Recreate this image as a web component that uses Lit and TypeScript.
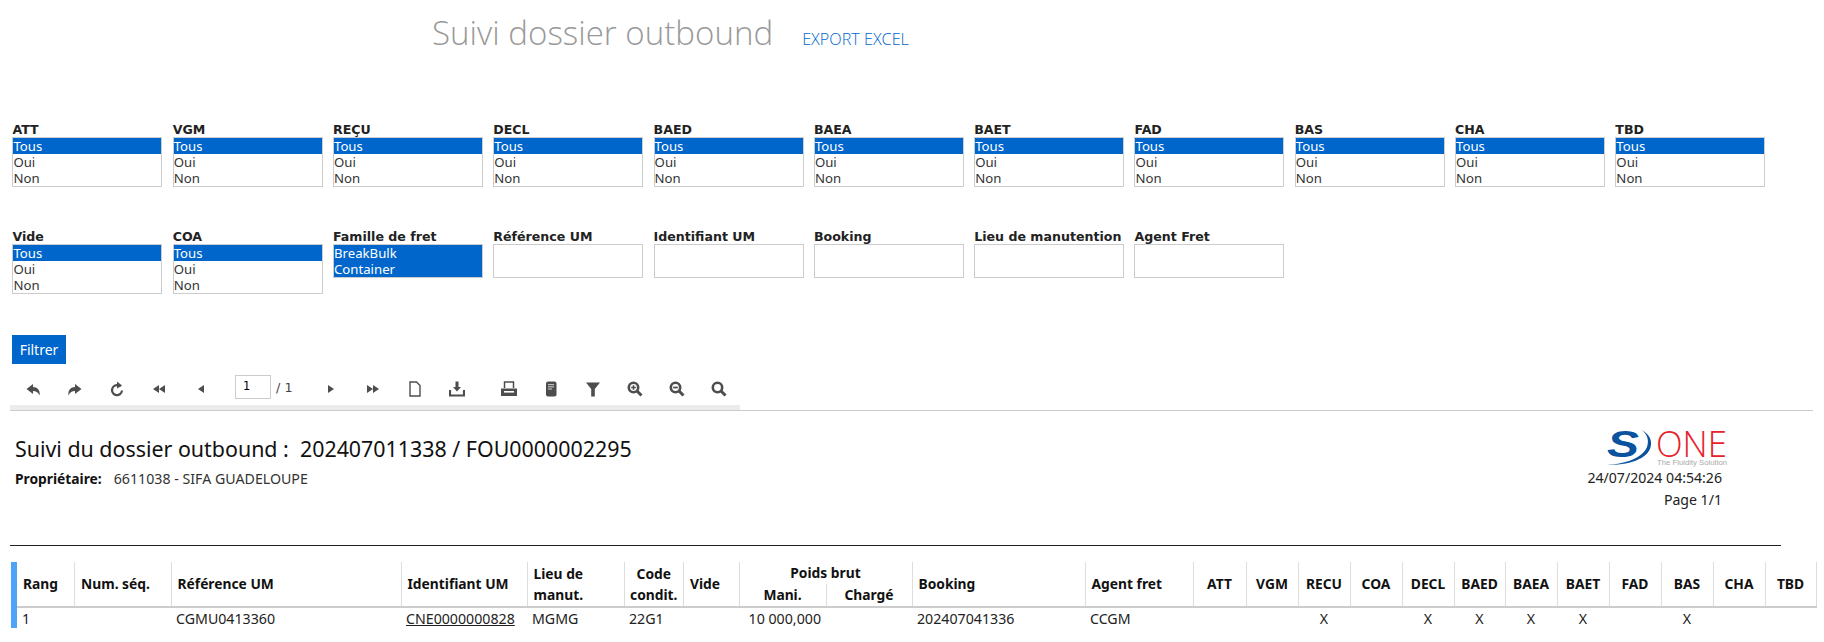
import { LitElement, html, css, svg } from "lit";
import { customElement } from "lit/decorators.js";

const row1 = ["ATT","VGM","REÇU","DECL","BAED","BAEA","BAET","FAD","BAS","CHA","TBD"];
const inputs = ["Référence UM","Identifiant UM","Booking","Lieu de manutention","Agent Fret"];
const flags: [string, number, boolean][] = [
  ["ATT",1193,false],["VGM",1246,false],["RECU",1298,true],["COA",1350,false],["DECL",1402,true],["BAED",1454,true],
  ["BAEA",1505,true],["BAET",1557,true],["FAD",1609,false],["BAS",1661,true],["CHA",1713,false],["TBD",1765,false],
];
const flagWidths = flags.map((f, i) => (i + 1 < flags.length ? flags[i + 1][1] : 1816) - f[1]);
const baseCols = [57.5, 96.5, 230, 126, 97, 59.5, 55.5, 87, 86, 173, 108];

const c = "#4d4d4d";
const icons: Record<string, unknown> = {
  undo: svg`<path d="M8 3 L1.5 8 L8 13 V10 C11 10 13 11 14.5 14.5 C15.5 9 12 6 8 6Z" fill="${c}"/>`,
  redo: svg`<path d="M8 3 L14.5 8 L8 13 V10 C5 10 3 11 1.5 14.5 C0.5 9 4 6 8 6Z" fill="${c}"/>`,
  reload: svg`<path d="M11.5 5.5 A5 5 0 1 0 13 9.5" fill="none" stroke="${c}" stroke-width="2.2"/><path d="M8 0.5 L13 4.5 L8 7.5Z" fill="${c}"/>`,
  first: svg`<path d="M8 4 L2 8 L8 12Z M14 4 L8 8 L14 12Z" fill="${c}"/>`,
  prev: svg`<path d="M11 4 L5 8 L11 12Z" fill="${c}"/>`,
  next: svg`<path d="M5 4 L11 8 L5 12Z" fill="${c}"/>`,
  last: svg`<path d="M2 4 L8 8 L2 12Z M8 4 L14 8 L8 12Z" fill="${c}"/>`,
  page: svg`<path d="M3 1 H9.5 L13 4.5 V15 H3Z" fill="#fff" stroke="${c}" stroke-width="1.4"/>`,
  download: svg`<path d="M6.5 0.5 H9.5 V6 H12 L8 10.5 L4 6 H6.5Z" fill="${c}"/><path d="M1 9 V14.5 H15 V9" fill="none" stroke="${c}" stroke-width="2.2"/>`,
  print: svg`<path d="M3.5 7 V1 H12.5 V7" fill="#fff" stroke="${c}" stroke-width="1.5"/><path d="M0 7.5 H16 V15 H0Z" fill="${c}"/><rect x="3" y="10" width="10" height="1.6" fill="#fff"/>`,
  book: svg`<rect x="3" y="0.5" width="10.5" height="15" rx="2" fill="${c}"/><rect x="5" y="3" width="6" height="1.2" fill="#bbb"/><rect x="5" y="5.2" width="6" height="1.2" fill="#bbb"/><rect x="5" y="7.4" width="4" height="1.2" fill="#bbb"/>`,
  filter: svg`<path d="M1 1.5 H15 L9.8 8 V15.5 L6.2 15.5 V8Z" fill="${c}"/>`,
  zoomIn: svg`<circle cx="6.5" cy="6.5" r="4.7" fill="none" stroke="${c}" stroke-width="2.6"/><path d="M10 10 L14.5 14.5" stroke="${c}" stroke-width="3"/><path d="M4.2 6.5 H8.8 M6.5 4.2 V8.8" stroke="${c}" stroke-width="1.6"/>`,
  zoomOut: svg`<circle cx="6.5" cy="6.5" r="4.7" fill="none" stroke="${c}" stroke-width="2.6"/><path d="M10 10 L14.5 14.5" stroke="${c}" stroke-width="3"/><path d="M4.2 6.5 H8.8" stroke="${c}" stroke-width="1.8"/>`,
  search: svg`<circle cx="6.5" cy="6.5" r="4.7" fill="none" stroke="${c}" stroke-width="2.6"/><path d="M10 10 L14.5 14.5" stroke="${c}" stroke-width="3"/>`,
};

@customElement("app-root")
export class AppRoot extends LitElement {
  static styles = css`
    :host { display: block; width: 1824px; height: 642px; overflow: hidden; background: #fff; font-family: "Noto Sans", "Open Sans", sans-serif; color: #222; }
    .top { display: flex; align-items: baseline; gap: 29px; padding-left: 432px; height: 122px; box-sizing: border-box; padding-top: 10px; }
    .title { font-family: "Open Sans", sans-serif; font-weight: 300; font-size: 33.1px; color: #999; line-height: 46px; white-space: nowrap; }
    .export { font-family: "Open Sans", sans-serif; font-weight: 300; font-size: 16.2px; color: #0066cc; white-space: nowrap; }
    .filters { display: grid; grid-template-columns: repeat(11, 150px); column-gap: 10.3px; padding-left: 12.4px; align-items: start; }
    .row2 { margin-top: 42px; }
    .label { font-family: "DejaVu Sans", sans-serif; font-weight: 700; font-size: 12.6px; line-height: 15px; height: 15px; color: #222; white-space: nowrap; }
    .list { border: 1px solid #ccc; box-sizing: border-box; height: 50px; font-family: "Noto Sans", sans-serif; font-size: 13.2px; color: #333; }
    .list.short { height: 34px; }
    .opt { height: 16px; line-height: 16px; }
    .opt.sel { background: #0066cc; color: #fff; }
    .text { height: 34px; border: 1px solid #ccc; box-sizing: border-box; }
    .filter-btn { display: block; margin: 41px 0 0 12px; width: 54px; height: 29px; background: #0066cc; color: #fff; border: 0; padding: 0; font-family: "Noto Sans", sans-serif; font-size: 14px; }
    .bar { display: flex; align-items: center; height: 41px; padding: 8px 0 0 12px; box-sizing: border-box; }
    .ico { width: 42px; height: 33px; display: flex; align-items: center; justify-content: center; flex: none; }
    .ico svg { width: 16px; height: 16px; display: block; }
    .page-in { width: 36px; height: 24px; border: 1px solid #ccc; box-sizing: border-box; margin: 0 0 3px 13px; font-family: "DejaVu Sans", sans-serif; font-size: 11.5px; line-height: 20px; padding-left: 7px; color: #000; }
    .page-tot { width: 39px; padding-left: 5px; box-sizing: border-box; font-family: "DejaVu Sans", sans-serif; font-size: 12.8px; color: #444; margin-bottom: 3px; }
    .gap8 { width: 10px; flex: none; }
    .rule { height: 5px; width: 730px; margin-left: 10px; background: #ececec; }
    .hr { height: 1px; margin: 0 11px 0 10px; background: #ccc; }
    .report { display: flex; justify-content: space-between; height: 134px; padding: 18px 102px 0 15px; box-sizing: border-box; }
    .info { padding-top: 6px; }
    h1 { margin: 0; font-family: "Noto Sans", sans-serif; font-weight: 400; font-size: 21.4px; line-height: 27px; color: #111; white-space: pre; }
    .owner { margin-top: 9px; font-size: 14.2px; line-height: 16px; display: flex; gap: 12px; color: #333; }
    .owner b { color: #111; font-size: 13.8px; }
    .meta { display: flex; flex-direction: column; align-items: flex-end; font-size: 14.1px; line-height: 22px; color: #222; }
    .logo { display: block; margin: -9px -25px -3px 0; }
    .black { height: 1px; margin: 0 43px 0 10px; background: #222; }
    .tbl-wrap { margin: 16px 0 0 11px; width: 1805px; height: 66px; border-left: 6px solid #4da3f7; box-sizing: border-box; }
    table { border-collapse: collapse; table-layout: fixed; width: 1799px; }
    th { font-size: 13.8px; font-weight: 700; line-height: 22px; height: 22px; padding: 0 6px; box-sizing: border-box; color: #111; border-right: 1px solid #ddd; text-align: center; white-space: nowrap; }
    th.l { text-align: left; }
    th.tight { padding: 0; }
    thead { border-bottom: 2px solid #ccc; }
    th.two { line-height: 21px; white-space: normal; }
    td { font-size: 14.2px; height: 22px; line-height: 22px; padding: 0 5px; color: #222; white-space: nowrap; }
    td.c { text-align: center; padding: 0; }
    td.r { text-align: right; }
    td a { color: #222; text-decoration: underline; }
  `;

  private list(selected: string[], options: string[], short = false) {
    return html`<div class="list ${short ? "short" : ""}">
      ${options.map((o) => html`<div class="opt ${selected.includes(o) ? "sel" : ""}">${o}</div>`)}
    </div>`;
  }

  private tri(label: string) {
    return html`<div><div class="label">${label}</div>${this.list(["Tous"], ["Tous", "Oui", "Non"])}</div>`;
  }

  private icon(name: string) {
    return html`<span class="ico"><svg viewBox="0 0 16 16">${icons[name]}</svg></span>`;
  }

  render() {
    return html`
      <div class="top"><span class="title">Suivi dossier outbound</span><span class="export">EXPORT EXCEL</span></div>
      <div class="filters">${row1.map((l) => this.tri(l))}</div>
      <div class="filters row2">
        ${this.tri("Vide")}${this.tri("COA")}
        <div><div class="label">Famille de fret</div>${this.list(["BreakBulk", "Container"], ["BreakBulk", "Container"], true)}</div>
        ${inputs.map((l) => html`<div><div class="label">${l}</div><div class="text"></div></div>`)}
      </div>
      <button class="filter-btn">Filtrer</button>
      <div class="bar">
        ${["undo","redo","reload","first","prev"].map((n) => this.icon(n))}
        <span class="page-in">1</span><span class="page-tot">/ 1</span>
        ${["next","last","page","download"].map((n) => this.icon(n))}
        <span class="gap8"></span>
        ${["print","book","filter","zoomIn","zoomOut","search"].map((n) => this.icon(n))}
      </div>
      <div class="rule"></div>
      <div class="hr"></div>
      <div class="report">
        <div class="info">
          <h1>Suivi du dossier outbound :  202407011338 / FOU0000002295</h1>
          <div class="owner"><b>Propriétaire:</b><span>6611038 - SIFA GUADELOUPE</span></div>
        </div>
        <div class="meta">
          <svg class="logo" width="140" height="50" viewBox="0 -10 140 50">
            <text x="0" y="27" font-family="Liberation Sans" font-weight="700" font-style="italic" font-size="37" fill="#0b539f" textLength="32" lengthAdjust="spacingAndGlyphs">S</text>
            <path d="M0 35 C20 35 42 30 44 15 C45 8 40 3 35 0 C41 5 42 11 40 17 C35 29 16 34 0 35Z" fill="#0b539f"/>
            <text x="49" y="27" font-family="Open Sans" font-weight="300" font-size="37" fill="#e8202a" textLength="71" lengthAdjust="spacingAndGlyphs">ONE</text>
            <text x="50" y="35" font-family="Liberation Sans" font-size="8" fill="#aaa" textLength="70" lengthAdjust="spacingAndGlyphs">The Fluidity Solution</text>
          </svg>
          <span>24/07/2024 04:54:26</span>
          <span>Page 1/1</span>
        </div>
      </div>
      <div class="black"></div>
      <div class="tbl-wrap">
        <table>
          <colgroup>
            ${baseCols.map((w) => html`<col style="width:${w}px" />`)}
            ${flagWidths.map((w) => html`<col style="width:${w}px" />`)}
          </colgroup>
          <thead>
            <tr>
              <th class="l" rowspan="2">Rang</th>
              <th class="l" rowspan="2">Num. séq.</th>
              <th class="l" rowspan="2">Référence UM</th>
              <th class="l" rowspan="2">Identifiant UM</th>
              <th class="l two" rowspan="2">Lieu de manut.</th>
              <th class="two tight" rowspan="2">Code condit.</th>
              <th class="l" rowspan="2">Vide</th>
              <th colspan="2">Poids brut</th>
              <th class="l" rowspan="2">Booking</th>
              <th class="l" rowspan="2">Agent fret</th>
              ${flags.map((f) => html`<th class="tight" rowspan="2">${f[0]}</th>`)}
            </tr>
            <tr><th>Mani.</th><th>Chargé</th></tr>
          </thead>
          <tbody>
            <tr>
              <td>1</td><td></td><td>CGMU0413360</td><td><a>CNE0000000828</a></td><td>MGMG</td><td>22G1</td><td></td>
              <td class="r">10 000,000</td><td></td><td>202407041336</td><td>CCGM</td>
              ${flags.map((f) => html`<td class="c">${f[2] ? "X" : ""}</td>`)}
            </tr>
          </tbody>
        </table>
      </div>
    `;
  }
}
